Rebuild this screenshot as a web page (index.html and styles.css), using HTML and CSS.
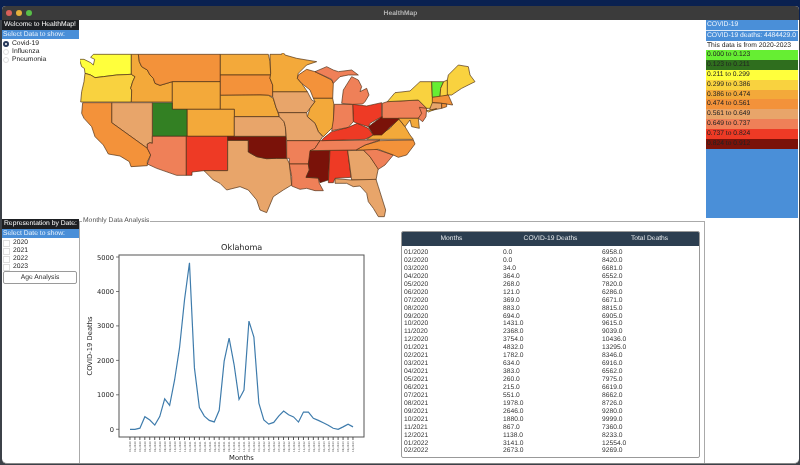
FILE: index.html
```html
<!DOCTYPE html>
<html lang="en">
<head>
    <meta charset="UTF-8">
    <title>HealthMap</title>
    <link rel="stylesheet" href="styles.css">
</head>
<body>
    <div class="window">
        <div class="titlebar">
            <span class="light light-red"></span>
            <span class="light light-yellow"></span>
            <span class="light light-green"></span>
            <span class="title">HealthMap</span>
        </div>

        <div class="top-row">
            <div class="side">
                <div class="side-head">Welcome to HealthMap!</div>
                <div class="side-sub">Select Data to show:</div>
                <div class="option-list">
                    <div class="option"><span class="radio radio-on"></span>Covid-19</div>
                    <div class="option"><span class="radio"></span>Influenza</div>
                    <div class="option"><span class="radio"></span>Pneumonia</div>
                </div>
            </div>

            <svg class="map" viewBox="60 99 1260 495" width="420" height="165">
                <!-- coordinates are 3x page pixels, states are drawn by fill class -->
                <polygon class="c3" points="58,118 72,118 92,128 100,135 104,118 92,112 100,103 214,103 214,163 170,165 130,170 105,173 92,165 75,160 73,145 65,140"/>
                <polygon class="c4" points="75,160 92,165 105,173 130,170 170,165 214,163 225,170 218,185 212,205 215,210 214,246 62,246 65,215 72,185"/>
                <polygon class="c5" points="214,103 235,103 238,125 245,140 262,150 270,165 280,175 285,190 300,196 337,185 337,246 214,246 215,210 212,205 218,185 225,170 214,163"/>
                <polygon class="c6" points="235,103 481,103 481,185 337,185 300,196 285,190 280,175 270,165 262,150 245,140 238,125"/>
                <polygon class="c5" points="337,185 481,185 481,268 337,268"/>
                <polygon class="c5" points="481,103 625,103 630,125 632,165 481,165"/>
                <polygon class="c6" points="481,165 632,165 630,175 638,195 638,230 625,226 600,225 481,226"/>
                <polygon class="c5" points="481,226 600,225 625,226 640,235 648,262 658,290 523,290 523,268 481,268"/>
                <polygon class="c5" points="381,268 523,268 523,349 381,349"/>
                <polygon class="c2" points="277,248 337,248 337,268 381,268 381,349 277,349"/>
                <polygon class="c7" points="155,248 277,248 277,370 270,368 262,372 262,385 155,308"/>
                <polygon class="c6" points="68,248 155,248 155,308 262,385 272,405 262,425 262,437 213,440 208,425 180,408 145,402 130,375 105,350 95,320 72,295 65,280"/>
                <polygon class="c8" points="277,349 379,349 379,466 350,466 290,445 262,432 272,405 262,385 262,372 270,368 277,370"/>
                <polygon class="c9" points="379,349 503,349 503,452 432,452 396,456 396,466 379,466"/>
                <polygon class="c7" points="503,361 565,361 565,396 590,410 620,416 650,415 680,415 688,430 695,495 670,510 640,530 620,578 600,570 590,540 565,510 540,500 500,510 480,490 460,480 432,452 503,452"/>
                <polygon class="c10" points="503,349 678,349 680,415 650,415 620,416 590,410 565,396 565,361 503,361"/>
                <polygon class="c7" points="523,290 658,290 672,305 676,320 678,349 523,349"/>
                <polygon class="c7" points="638,215 742,215 755,240 765,245 750,265 740,278 655,278 648,262 640,235 638,230"/>
                <polygon class="c5" points="630,103 665,103 668,95 675,105 710,115 770,125 740,135 715,160 712,175 725,190 742,215 638,215 638,195 630,175 632,160"/>
                <polygon class="c6" points="715,165 740,148 765,155 815,180 820,190 818,235 760,235 750,210 725,190 712,175"/>
                <polygon class="c5" points="760,235 818,235 822,255 820,320 805,335 790,350 775,335 765,310 742,290 750,265 765,245"/>
                <polygon class="c7" points="655,278 740,278 742,290 765,310 775,335 788,350 780,362 680,362 676,320 672,305 658,290"/>
                <polygon class="c8" points="680,362 780,362 765,385 750,415 745,432 688,432 688,415 680,415"/>
                <polygon class="c8" points="688,432 745,432 748,450 738,472 775,474 778,490 790,512 765,512 740,505 720,508 695,498 695,470"/>
                <polygon class="c10" points="750,392 810,390 805,480 780,488 775,474 738,472 748,450 745,432"/>
                <polygon class="c9" points="810,390 863,390 873,472 825,475 820,488 805,488"/>
                <polygon class="c7" points="863,392 910,390 930,410 955,445 948,480 875,480"/>
                <polygon class="c7" points="825,476 875,480 948,478 955,500 977,570 973,590 955,590 940,565 925,545 920,520 900,498 880,500 860,490 825,490"/>
                <polygon class="c8" points="910,390 940,385 1000,405 975,435 955,448 930,410"/>
                <polygon class="c6" points="888,390 915,375 960,362 1060,360 1065,372 1040,405 1015,412 1000,405 955,388 910,390"/>
                <polygon class="c8" points="750,392 765,385 780,362 960,360 915,375 888,390"/>
                <polygon class="c9" points="790,355 815,335 865,322 892,310 925,325 940,345 915,358 785,362"/>
                <polygon class="c5" points="920,358 940,345 965,340 990,325 1015,295 1035,320 1050,345 1060,358"/>
                <polygon class="c10" points="925,320 965,290 1020,295 990,322 965,345 940,345"/>
                <polygon class="c9" points="878,253 920,258 965,248 965,290 930,310 925,320 892,310 880,305"/>
                <polygon class="c8" points="823,253 878,253 880,305 865,322 815,332 820,300"/>
                <polygon class="c8" points="845,250 850,210 875,170 895,180 905,200 900,215 920,205 927,225 915,245 908,252 878,253"/>
                <polygon class="c8" points="765,155 800,140 820,150 835,155 875,150 895,165 865,165 840,170 820,190 815,178"/>
                <polygon class="c8" points="967,250 982,245 1075,240 1100,265 1075,295 967,295"/>
                <polygon class="c4" points="982,245 1005,218 1050,213 1080,185 1115,185 1117,230 1125,255 1110,265 1100,265 1075,240"/>
                <polygon class="c1" points="1115,185 1151,185 1142,205 1140,232 1117,232"/>
                <polygon class="c4" points="1151,185 1162,180 1165,225 1140,232 1142,205"/>
                <polygon class="c4" points="1165,165 1195,135 1225,140 1230,165 1245,185 1205,205 1175,225 1162,225 1162,180"/>
                <polygon class="c6" points="1117,232 1165,225 1178,255 1145,250 1117,248"/>
                <polygon class="c7" points="1117,248 1145,250 1145,265 1110,272 1110,265"/>
                <polygon class="c6" points="1145,250 1160,252 1160,260 1145,265"/>
                <polygon class="c8" points="1078,262 1100,265 1098,290 1088,305 1075,295 1085,280"/>
                <polygon class="c5" points="1015,295 1075,295 1078,325 1055,320 1050,300 1035,320"/>
                <polygon class="c4" points="1100,272 1130,266 1105,276"/>
            </svg>

            <div class="legend">
                <div class="legend-head">COVID-19</div>
                <div class="legend-head legend-deaths">COVID-19 deaths: 4484429.0</div>
                <div class="legend-note">This data is from 2020-2023</div>
                <div class="legend-row c1">0.000 to 0.123</div>
                <div class="legend-row c2">0.123 to 0.211</div>
                <div class="legend-row c3">0.211 to 0.299</div>
                <div class="legend-row c4">0.299 to 0.386</div>
                <div class="legend-row c5">0.386 to 0.474</div>
                <div class="legend-row c6">0.474 to 0.561</div>
                <div class="legend-row c7">0.561 to 0.649</div>
                <div class="legend-row c8">0.649 to 0.737</div>
                <div class="legend-row c9">0.737 to 0.824</div>
                <div class="legend-row c10">0.824 to 0.912</div>
            </div>
        </div>

        <div class="bottom-row">
            <div class="side">
                <div class="side-head">Representation by Date:</div>
                <div class="side-sub">Select Date to show:</div>
                <div class="year-list">
                    <div class="option"><span class="check"></span>2020</div>
                    <div class="option"><span class="check"></span>2021</div>
                    <div class="option"><span class="check"></span>2022</div>
                    <div class="option"><span class="check"></span>2023</div>
                </div>
                <button class="age-button">Age Analysis</button>
            </div>

            <fieldset class="group">
                <legend>Monthly Data Analysis</legend>

                <!-- viewBox is in page pixels -->
                <svg class="chart" viewBox="80 236 320 228" width="320" height="228">
                    <text class="chart-title" x="241.7" y="250">Oklahoma</text>
                    <rect class="axes" x="119" y="255" width="245" height="182"/>

                    <g class="y-ticks">
                        <line x1="116" x2="119" y1="429.3" y2="429.3"/>
                        <line x1="116" x2="119" y1="394.8" y2="394.8"/>
                        <line x1="116" x2="119" y1="360.4" y2="360.4"/>
                        <line x1="116" x2="119" y1="325.9" y2="325.9"/>
                        <line x1="116" x2="119" y1="291.5" y2="291.5"/>
                        <line x1="116" x2="119" y1="257" y2="257"/>
                    </g>
                    <g class="y-labels">
                        <text x="114" y="431.8">0</text>
                        <text x="114" y="397.3">1000</text>
                        <text x="114" y="362.9">2000</text>
                        <text x="114" y="328.4">3000</text>
                        <text x="114" y="294">4000</text>
                        <text x="114" y="259.5">5000</text>
                    </g>
                    <text class="axis-label" transform="translate(92 346) rotate(-90)">COVID-19 Deaths</text>
                    <text class="axis-label" x="241.5" y="460">Months</text>

                    <polyline class="series" transform="translate(130 429.3) scale(4.956 -0.03446)" points="0,0 1,0 2,34 3,364 4,268 5,121 6,369 7,883 8,694 9,1431 10,2368 11,3754 12,4832 13,1782 14,634 15,383 16,260 17,215 18,551 19,1978 20,2646 21,1880 22,867 23,1138 24,3141 25,2673 26,760 27,270 28,150 29,200 30,380 31,530 32,420 33,360 34,210 35,500 36,500 37,320 38,260 39,190 40,120 41,30 42,0 43,70 44,150 45,70"/>

                    <line class="x-ticks" x1="129.5" x2="354" y1="438.5" y2="438.5"/>
                    <g class="x-labels">
                        <text transform="translate(131 452) rotate(-90)">01/2020</text>
                        <text transform="translate(136 452) rotate(-90)">02/2020</text>
                        <text transform="translate(141 452) rotate(-90)">03/2020</text>
                        <text transform="translate(146 452) rotate(-90)">04/2020</text>
                        <text transform="translate(151 452) rotate(-90)">05/2020</text>
                        <text transform="translate(156 452) rotate(-90)">06/2020</text>
                        <text transform="translate(161 452) rotate(-90)">07/2020</text>
                        <text transform="translate(166 452) rotate(-90)">08/2020</text>
                        <text transform="translate(171 452) rotate(-90)">09/2020</text>
                        <text transform="translate(176 452) rotate(-90)">10/2020</text>
                        <text transform="translate(181 452) rotate(-90)">11/2020</text>
                        <text transform="translate(186 452) rotate(-90)">12/2020</text>
                        <text transform="translate(190.5 452) rotate(-90)">01/2021</text>
                        <text transform="translate(195.5 452) rotate(-90)">02/2021</text>
                        <text transform="translate(200.5 452) rotate(-90)">03/2021</text>
                        <text transform="translate(205.5 452) rotate(-90)">04/2021</text>
                        <text transform="translate(210.5 452) rotate(-90)">05/2021</text>
                        <text transform="translate(215.5 452) rotate(-90)">06/2021</text>
                        <text transform="translate(220 452) rotate(-90)">07/2021</text>
                        <text transform="translate(225 452) rotate(-90)">08/2021</text>
                        <text transform="translate(230 452) rotate(-90)">09/2021</text>
                        <text transform="translate(235 452) rotate(-90)">10/2021</text>
                        <text transform="translate(240 452) rotate(-90)">11/2021</text>
                        <text transform="translate(245 452) rotate(-90)">12/2021</text>
                        <text transform="translate(250 452) rotate(-90)">01/2022</text>
                        <text transform="translate(255 452) rotate(-90)">02/2022</text>
                        <text transform="translate(260 452) rotate(-90)">03/2022</text>
                        <text transform="translate(265 452) rotate(-90)">04/2022</text>
                        <text transform="translate(270 452) rotate(-90)">05/2022</text>
                        <text transform="translate(275 452) rotate(-90)">06/2022</text>
                        <text transform="translate(280 452) rotate(-90)">07/2022</text>
                        <text transform="translate(284.5 452) rotate(-90)">08/2022</text>
                        <text transform="translate(289.5 452) rotate(-90)">09/2022</text>
                        <text transform="translate(294.5 452) rotate(-90)">10/2022</text>
                        <text transform="translate(299.5 452) rotate(-90)">11/2022</text>
                        <text transform="translate(304.5 452) rotate(-90)">12/2022</text>
                        <text transform="translate(309.5 452) rotate(-90)">01/2023</text>
                        <text transform="translate(314.5 452) rotate(-90)">02/2023</text>
                        <text transform="translate(319.5 452) rotate(-90)">03/2023</text>
                        <text transform="translate(324.5 452) rotate(-90)">04/2023</text>
                        <text transform="translate(329.5 452) rotate(-90)">05/2023</text>
                        <text transform="translate(334 452) rotate(-90)">06/2023</text>
                        <text transform="translate(339 452) rotate(-90)">07/2023</text>
                        <text transform="translate(344 452) rotate(-90)">08/2023</text>
                        <text transform="translate(349 452) rotate(-90)">09/2023</text>
                        <text transform="translate(354 452) rotate(-90)">10/2023</text>
                    </g>
                </svg>

                <div class="table-frame">
                    <table class="data-table">
                        <thead>
                            <tr><th>Months</th><th>COVID-19 Deaths</th><th>Total Deaths</th></tr>
                        </thead>
                        <tbody>
                            <tr><td>01/2020</td><td>0.0</td><td>6958.0</td></tr>
                            <tr><td>02/2020</td><td>0.0</td><td>8420.0</td></tr>
                            <tr><td>03/2020</td><td>34.0</td><td>6681.0</td></tr>
                            <tr><td>04/2020</td><td>364.0</td><td>6552.0</td></tr>
                            <tr><td>05/2020</td><td>268.0</td><td>7820.0</td></tr>
                            <tr><td>06/2020</td><td>121.0</td><td>6286.0</td></tr>
                            <tr><td>07/2020</td><td>369.0</td><td>6671.0</td></tr>
                            <tr><td>08/2020</td><td>883.0</td><td>8815.0</td></tr>
                            <tr><td>09/2020</td><td>694.0</td><td>6905.0</td></tr>
                            <tr><td>10/2020</td><td>1431.0</td><td>9615.0</td></tr>
                            <tr><td>11/2020</td><td>2368.0</td><td>9039.0</td></tr>
                            <tr><td>12/2020</td><td>3754.0</td><td>10436.0</td></tr>
                            <tr><td>01/2021</td><td>4832.0</td><td>13295.0</td></tr>
                            <tr><td>02/2021</td><td>1782.0</td><td>8346.0</td></tr>
                            <tr><td>03/2021</td><td>634.0</td><td>6916.0</td></tr>
                            <tr><td>04/2021</td><td>383.0</td><td>6562.0</td></tr>
                            <tr><td>05/2021</td><td>260.0</td><td>7975.0</td></tr>
                            <tr><td>06/2021</td><td>215.0</td><td>6619.0</td></tr>
                            <tr><td>07/2021</td><td>551.0</td><td>8662.0</td></tr>
                            <tr><td>08/2021</td><td>1978.0</td><td>8726.0</td></tr>
                            <tr><td>09/2021</td><td>2646.0</td><td>9280.0</td></tr>
                            <tr><td>10/2021</td><td>1880.0</td><td>9999.0</td></tr>
                            <tr><td>11/2021</td><td>867.0</td><td>7360.0</td></tr>
                            <tr><td>12/2021</td><td>1138.0</td><td>8233.0</td></tr>
                            <tr><td>01/2022</td><td>3141.0</td><td>12554.0</td></tr>
                            <tr><td>02/2022</td><td>2673.0</td><td>9269.0</td></tr>
                        </tbody>
                    </table>
                </div>
            </fieldset>
        </div>
    </div>
</body>
</html>
```

FILE: styles.css
```css
html, body {
    height: 100%;
}
body {
    margin: 0;
    overflow: hidden;
    background: linear-gradient(#0a2150 0, #0a2150 20px, #3c4148 20px);
    font-family: "Liberation Sans", Arial, sans-serif;
    font-size: 6.75px;
    text-rendering: geometricPrecision;
    color: #222;
}
.window {
    margin: 6px 1px 0 2px;
    height: 458px;
    background-color: white;
    border-radius: 4px 4px 5px 5px;
    overflow: hidden;
    border-bottom: 1px solid #888;
    box-sizing: border-box;
    filter: blur(0.3px);
}
.titlebar {
    height: 14px;
    display: flex;
    align-items: center;
    gap: 4px;
    padding-left: 4px;
    background-color: #3b3b3b;
    position: relative;
}
.light {
    width: 6px;
    height: 6px;
    border-radius: 50%;
}
.light-red { background-color: #d9605a; }
.light-yellow { background-color: #e4b03c; }
.light-green { background-color: #58bf48; }
.title {
    position: absolute;
    left: 0;
    right: 0;
    text-align: center;
    font-size: 6.7px;
    font-weight: bold;
    color: #b4b4b4;
}

/* top part: options, map, legend */
.top-row {
    display: flex;
    height: 198px;
}
.side {
    width: 77px;
    flex: none;
}
.side-head {
    height: 10px;
    line-height: 10px;
    padding-left: 2px;
    background-color: #1d1f22;
    color: white;
    white-space: nowrap;
}
.side-sub {
    height: 9px;
    line-height: 9px;
    padding-left: 1px;
    background-color: #4a8fd8;
    color: #e8f2fc;
    white-space: nowrap;
}
.option-list {
    padding-top: 1px;
}
.option {
    display: flex;
    align-items: center;
    height: 8px;
    line-height: 8px;
}
.radio {
    width: 4px;
    height: 4px;
    margin: 0 3px 0 1px;
    border: 1px solid #ddd;
    border-radius: 50%;
    background-color: white;
}
.radio-on {
    border: 2px solid #26385a;
    width: 2px;
    height: 2px;
}
.check {
    width: 5px;
    height: 5px;
    margin: 0 3px 0 1px;
    border: 1px solid #ddd;
    background-color: white;
}
.map {
    flex: none;
    margin: 33px 0 0 1px;
}
.map polygon {
    stroke: #4a2c12;
    stroke-width: 2;
    stroke-linejoin: round;
}
polygon.c1 { fill: #66ee33; }
polygon.c2 { fill: #338023; }
polygon.c3 { fill: #ffff3c; }
polygon.c4 { fill: #f9d23f; }
polygon.c5 { fill: #f3a93a; }
polygon.c6 { fill: #f3923a; }
polygon.c7 { fill: #e8a56a; }
polygon.c8 { fill: #ef8058; }
polygon.c9 { fill: #ee3a25; }
polygon.c10 { fill: #7a1209; }

.legend {
    width: 92px;
    margin-left: auto;
    margin-right: 1px;
    background-color: #4a8fd8;
    white-space: nowrap;
}
.legend-head {
    height: 10px;
    line-height: 10px;
    padding-left: 1px;
    color: #eef5fd;
}
.legend-deaths {
    border-top: 1px solid #dbe9f8;
}
.legend-note {
    height: 9px;
    line-height: 9px;
    padding-left: 1px;
    background-color: white;
}
.legend-row {
    height: 9.9px;
    line-height: 9.9px;
    padding-left: 1px;
}
.legend-row.c1 { background-color: #66ee33; }
.legend-row.c2 { background-color: #2f6e1e; }
.legend-row.c3 { background-color: #ffff3c; }
.legend-row.c4 { background-color: #f9d23f; }
.legend-row.c5 { background-color: #f3a93a; }
.legend-row.c6 { background-color: #f3923a; }
.legend-row.c7 { background-color: #e8a56a; }
.legend-row.c8 { background-color: #ef8058; }
.legend-row.c9 { background-color: #ee3a25; }
.legend-row.c10 { background-color: #7a1209; }

/* bottom part: date options, chart, table */
.bottom-row {
    display: flex;
    height: 245px;
    padding-top: 1px;
    box-sizing: border-box;
}
.year-list {
    padding-top: 1px;
}
.age-button {
    display: block;
    width: 74px;
    height: 13px;
    margin: 0 0 0 1px;
    padding: 0;
    border: 1px solid #9a9a9a;
    border-radius: 2px;
    background-color: white;
    font-family: inherit;
    font-size: 6.75px;
    text-rendering: inherit;
    color: #333;
}
.group {
    display: flex;
    flex: none;
    width: 626px;
    height: 245px;
    margin: 0;
    padding: 0;
    border: 1px solid #aaa;
    border-bottom: none;
    box-sizing: border-box;
    min-width: 0;
}
.group legend {
    margin-left: 2px;
    padding: 0 1px;
    font-size: 6.75px;
    line-height: 4px;
    height: 4px;
    color: #555;
}
.chart {
    flex: none;
    margin-top: 13px;
}
.chart text {
    font-family: "DejaVu Sans", sans-serif;
    fill: #222;
}
.chart-title {
    font-size: 8.1px;
    text-anchor: middle;
}
.axes {
    fill: none;
    stroke: #555;
    stroke-width: 1;
}
.y-ticks line {
    stroke: #444;
    stroke-width: 0.7;
}
.y-labels text {
    font-size: 6.7px;
    text-anchor: end;
}
.axis-label {
    font-size: 6.8px;
    text-anchor: middle;
}
.series {
    fill: none;
    stroke: #3f7cac;
    stroke-width: 1.2;
    vector-effect: non-scaling-stroke;
}
.x-ticks {
    stroke: #444;
    stroke-width: 3;
    stroke-dasharray: 0.9 4.056;
}
.x-labels text {
    font-size: 2.6px;
    fill: #555;
}
.table-frame {
    flex: none;
    width: 299px;
    height: 227px;
    margin: 8px 0 0 1px;
    border: 1px solid #999;
    border-radius: 2px;
    box-sizing: border-box;
    overflow: hidden;
}
.data-table {
    display: block;
    font-size: 6.7px;
}
.data-table thead,
.data-table tbody {
    display: block;
}
.data-table tbody {
    padding-top: 3px;
}
.data-table tr {
    display: grid;
    grid-template-columns: repeat(3, 1fr);
}
.data-table th {
    height: 14px;
    line-height: 14px;
    padding: 0;
    background-color: #2c3e50;
    color: #e6e9ec;
    font-weight: normal;
    text-align: center;
}
.data-table td {
    height: 7.95px;
    line-height: 7.95px;
    padding: 0 0 0 2px;
    color: #333;
}
```
